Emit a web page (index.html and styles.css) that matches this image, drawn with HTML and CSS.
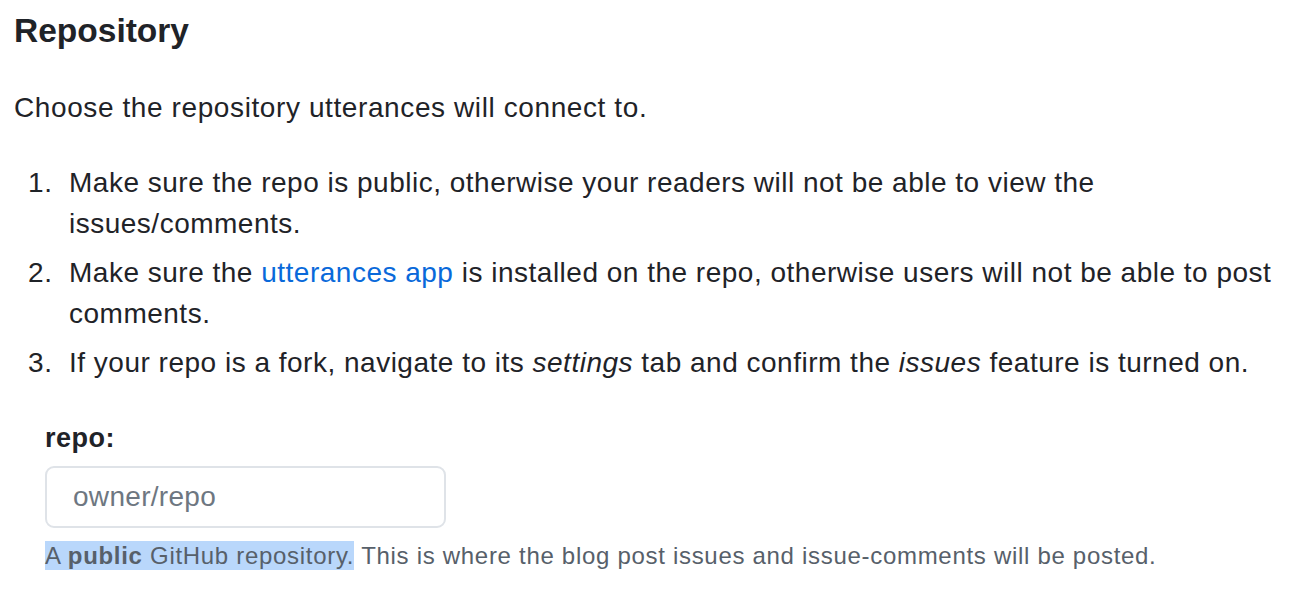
FILE: index.html
```html
<!DOCTYPE html>
<html lang="en">
<head>
<meta charset="utf-8">
<title>Repository</title>
<link rel="stylesheet" href="styles.css">
</head>
<body>
<main class="content">
  <h2 class="title">Repository</h2>
  <p class="intro">Choose the repository utterances will connect to.</p>
  <ol class="steps">
    <li>Make sure the repo is public, otherwise your readers will not be able to view the issues/comments.</li>
    <li>Make sure the <a class="link" href="#">utterances app</a> is installed on the repo, otherwise users will not be able to post comments.</li>
    <li>If your repo is a fork, navigate to its <em>settings</em> tab and confirm the <em>issues</em> feature is turned on.</li>
  </ol>
  <div class="field">
    <label class="field-label" for="repo">repo:</label>
    <input class="field-input" id="repo" type="text" placeholder="owner/repo">
    <p class="note"><span class="selected">A <strong>public</strong> GitHub repository.</span> This is where the blog post issues and issue-comments will be posted.</p>
  </div>
</main>
</body>
</html>
```

FILE: styles.css
```css
html, body {
  margin: 0;
  padding: 0;
  background: #ffffff;
}

body {
  font-family: "Liberation Sans", Arial, sans-serif;
  color: #1f2328;
  font-size: 28px;
  line-height: 41px;
  letter-spacing: 0.6px;
}

.content {
  padding: 8px 0 0 14px;
  width: 1280px;
}

.title {
  margin: 0;
  font-size: 33.5px;
  line-height: 45px;
  font-weight: 700;
  letter-spacing: 0;
}

.intro {
  margin: 34px 0 0;
}

.steps {
  margin: 34px 0 0;
  padding-left: 55px;
  letter-spacing: 0.5px;
}

.steps li::marker {
  content: counter(list-item) ".\00a0\00a0";
}

.steps li + li {
  margin-top: 8px;
}

.link {
  color: #0969da;
  text-decoration: none;
}

.field {
  margin: 35px 0 0 31px;
  display: flex;
  flex-direction: column;
  align-items: flex-start;
}

.field-label {
  font-size: 27px;
  font-weight: 700;
  letter-spacing: 0.5px;
}

.field-input {
  margin-top: 7px;
  box-sizing: border-box;
  width: 401px;
  height: 62px;
  padding: 0 26px;
  border: 2px solid #dfe3e8;
  border-radius: 9px;
  font-family: "Liberation Sans", Arial, sans-serif;
  font-size: 28px;
  letter-spacing: 0.3px;
  color: #1f2328;
  background: #ffffff;
  outline: none;
}

.field-input::placeholder {
  color: #6e7781;
}

.note {
  margin: 12px 0 0;
  font-size: 24px;
  line-height: 31px;
  letter-spacing: 0.7px;
  color: #57606a;
}

.selected {
  background: #b9d7fb;
  padding: 1px 0;
}
```
